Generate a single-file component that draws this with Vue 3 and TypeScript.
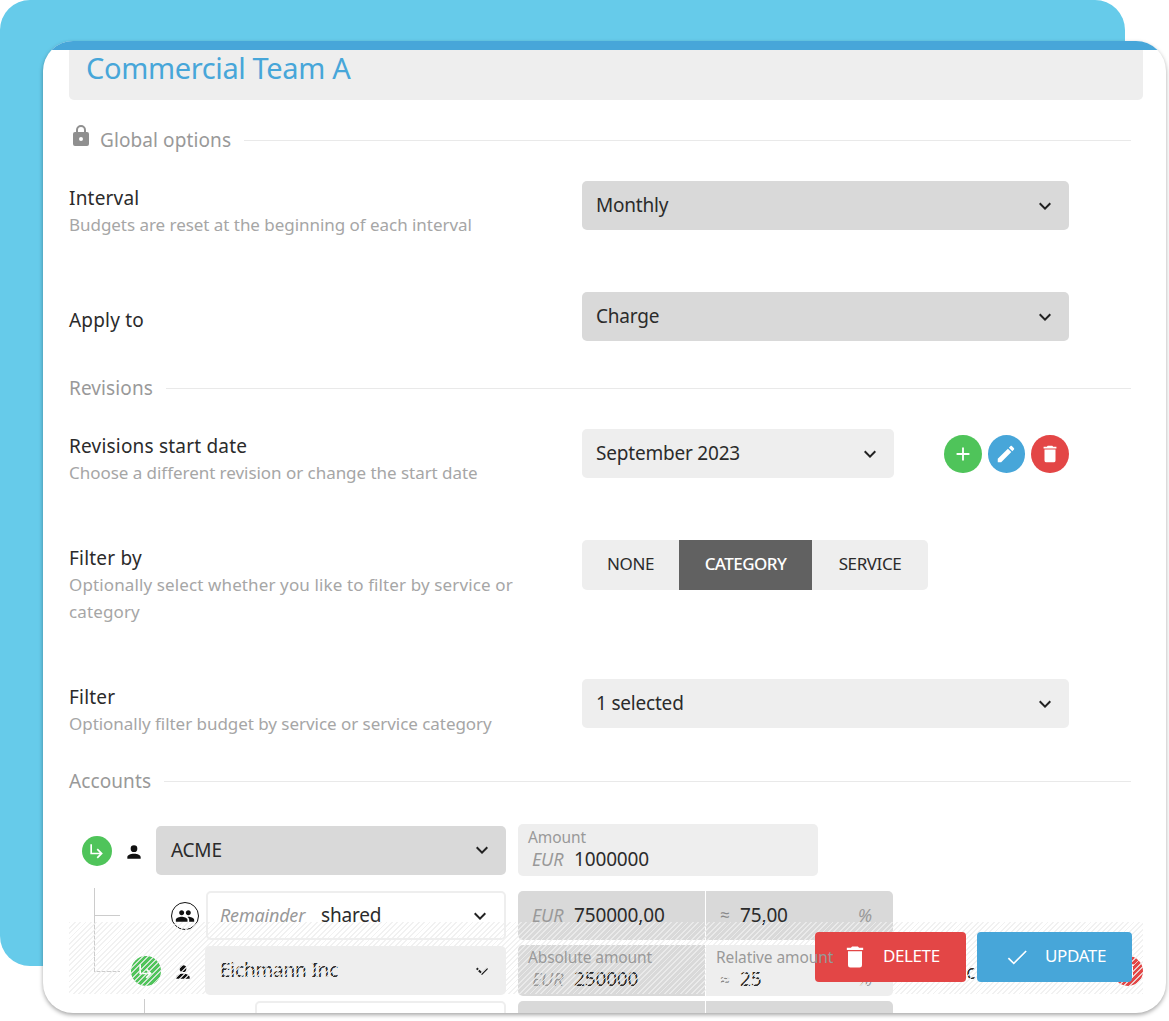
<script setup lang="ts">
const filterOptions: string[] = ['NONE', 'CATEGORY', 'SERVICE']
const activeFilter = 'CATEGORY'
const icons: Record<string, string> = {
  plus: 'M19 13h-6v6h-2v-6H5v-2h6V5h2v6h6v2z',
  pencil: 'M20.71 7.04c.39-.39.39-1.04 0-1.41l-2.34-2.34c-.37-.39-1.02-.39-1.41 0l-1.84 1.83 3.75 3.75M3 17.25V21h3.75L17.81 9.93l-3.75-3.75L3 17.25z',
  trash: 'M19 4h-3.5l-1-1h-5l-1 1H5v2h14M6 19a2 2 0 0 0 2 2h8a2 2 0 0 0 2-2V7H6v12z',
  lock: 'M12 17a2 2 0 0 0 2-2 2 2 0 0 0-2-2 2 2 0 0 0-2 2 2 2 0 0 0 2 2m6-9a2 2 0 0 1 2 2v10a2 2 0 0 1-2 2H6a2 2 0 0 1-2-2V10a2 2 0 0 1 2-2h1V6a5 5 0 0 1 5-5 5 5 0 0 1 5 5v2h1m-6-5a3 3 0 0 0-3 3v2h6V6a3 3 0 0 0-3-3z',
  check: 'M21 7L9 19l-5.5-5.5 1.1-1.1L9 16.8 19.9 5.9 21 7z',
  arrow: 'M19 15l-6 6-1.42-1.42L15.17 16H4V4h2v10h9.17l-3.59-3.58L13 9l6 6z',
  person: 'M12 4a4 4 0 0 1 4 4 4 4 0 0 1-4 4 4 4 0 0 1-4-4 4 4 0 0 1 4-4m0 10c4.42 0 8 1.79 8 4v2H4v-2c0-2.21 3.58-4 8-4z',
  people: 'M16 11c1.66 0 2.99-1.34 2.99-3S17.66 5 16 5c-1.66 0-3 1.34-3 3s1.34 3 3 3zm-8 0c1.66 0 2.99-1.34 2.99-3S9.66 5 8 5C6.34 5 5 6.34 5 8s1.34 3 3 3zm0 2c-2.33 0-7 1.17-7 3.5V19h14v-2.5c0-2.33-4.67-3.5-7-3.5zm8 0c-.29 0-.62.02-.97.05 1.16.84 1.97 1.97 1.97 3.45V19h6v-2.5c0-2.33-4.67-3.5-7-3.5z',
  chevron: 'M7.41 8.59L12 13.17l4.59-4.58L18 10l-6 6-6-6 1.41-1.41z'
}
</script>

<template>
  <div class="page">
    <div class="back-card"></div>
    <main class="card">
      <div class="strip"></div>
      <h1 class="title">Commercial Team A</h1>

      <div class="section section-first">
        <svg class="lock" viewBox="0 0 24 24"><path :d="icons.lock" /></svg>
        <span class="section-name">Global options</span>
        <span class="section-line"></span>
      </div>

      <div class="row row-interval">
        <div>
          <div class="label">Interval</div>
          <div class="desc">Budgets are reset at the beginning of each interval</div>
        </div>
        <div class="select dark">
          <span>Monthly</span>
          <svg class="chev" viewBox="0 0 24 24"><path :d="icons.chevron" /></svg>
        </div>
      </div>

      <div class="row row-apply">
        <div class="label label-single">Apply to</div>
        <div class="select dark">
          <span>Charge</span>
          <svg class="chev" viewBox="0 0 24 24"><path :d="icons.chevron" /></svg>
        </div>
      </div>

      <div class="section section-rev">
        <span class="section-name no-icon">Revisions</span>
        <span class="section-line"></span>
      </div>

      <div class="row row-rev">
        <div>
          <div class="label">Revisions start date</div>
          <div class="desc">Choose a different revision or change the start date</div>
        </div>
        <div class="rev-control">
          <div class="select rev-select">
            <span>September 2023</span>
            <svg class="chev" viewBox="0 0 24 24"><path :d="icons.chevron" /></svg>
          </div>
          <div class="round-group">
            <button class="round green"><svg viewBox="0 0 24 24"><path :d="icons.plus" /></svg></button>
            <button class="round blue"><svg viewBox="0 0 24 24"><path :d="icons.pencil" /></svg></button>
            <button class="round red"><svg viewBox="0 0 24 24"><path :d="icons.trash" /></svg></button>
          </div>
        </div>
      </div>

      <div class="row row-filterby">
        <div>
          <div class="label">Filter by</div>
          <div class="desc desc-narrow">Optionally select whether you like to filter by service or category</div>
        </div>
        <div class="seg">
          <span
            v-for="opt in filterOptions"
            :key="opt"
            class="seg-item"
            :class="[opt.toLowerCase(), { active: opt === activeFilter }]"
          >{{ opt }}</span>
        </div>
      </div>

      <div class="row row-filter">
        <div>
          <div class="label">Filter</div>
          <div class="desc">Optionally filter budget by service or service category</div>
        </div>
        <div class="select">
          <span>1 selected</span>
          <svg class="chev" viewBox="0 0 24 24"><path :d="icons.chevron" /></svg>
        </div>
      </div>

      <div class="section section-acc">
        <span class="section-name no-icon">Accounts</span>
        <span class="section-line"></span>
      </div>

      <div class="accounts">
        <span class="tree tree-v1"></span>
        <span class="tree tree-h1"></span>
        <span class="tree tree-h2"></span>
        <span class="tree tree-v2"></span>

        <div class="acc-row acc-1">
          <div class="acc-left">
            <span class="circle"><svg viewBox="0 0 24 24"><path :d="icons.arrow" /></svg></span>
            <svg class="person" viewBox="0 0 24 24"><path :d="icons.person" /></svg>
            <div class="select dark acc-select w350">
              <span>ACME</span>
              <svg class="chev" viewBox="0 0 24 24"><path :d="icons.chevron" /></svg>
            </div>
          </div>
          <div class="amount-box">
            <div class="mini">Amount</div>
            <div class="val-line"><em>EUR</em><span>1000000</span></div>
          </div>
        </div>

        <div class="acc-row acc-2">
          <div class="acc-left">
            <span class="people-ring"><svg viewBox="0 0 24 24"><path :d="icons.people" /></svg></span>
            <div class="select outlined acc-select w300">
              <span class="share"><em>Remainder</em><span>shared</span></span>
              <svg class="chev" viewBox="0 0 24 24"><path :d="icons.chevron" /></svg>
            </div>
          </div>
          <div class="pair">
            <div class="cell dark-cell"><div class="val-line"><em>EUR</em><span>750000,00</span></div></div>
            <div class="cell dark-cell">
              <div class="val-line approx"><i>≈</i><span>75,00</span><em class="pct">%</em></div>
            </div>
          </div>
        </div>

        <div class="acc-row acc-3">
          <div class="acc-left">
            <span class="circle"><svg viewBox="0 0 24 24"><path :d="icons.arrow" /></svg></span>
            <svg class="person" viewBox="0 0 24 24"><path :d="icons.person" /></svg>
            <div class="select acc-select w301">
              <span>Eichmann Inc</span>
              <svg class="chev" viewBox="0 0 24 24"><path :d="icons.chevron" /></svg>
            </div>
          </div>
          <div class="pair tall">
            <div class="cell dark-cell">
              <div class="mini">Absolute amount</div>
              <div class="val-line"><em>EUR</em><span>250000</span></div>
            </div>
            <div class="cell light-cell">
              <div class="mini">Relative amount</div>
              <div class="val-line approx"><i>≈</i><span>25</span><em class="pct">%</em></div>
            </div>
          </div>
          <span class="acc-extra">Inc</span>
          <span class="circle red-circle"><svg viewBox="0 0 24 24"><path :d="icons.trash" /></svg></span>
        </div>

        <div class="acc-row acc-4">
          <div class="acc-left">
            <div class="select outlined acc-select w251"></div>
          </div>
          <div class="pair">
            <div class="cell dark-cell"></div>
            <div class="cell dark-cell"></div>
          </div>
        </div>
      </div>

      <div class="hatch"></div>
      <div class="actions">
        <button class="act act-delete">
          <svg class="act-icon trash-icon" viewBox="0 0 24 24"><path :d="icons.trash" /></svg>
          <span>DELETE</span>
        </button>
        <button class="act act-update">
          <svg class="act-icon check-icon" viewBox="0 0 24 24"><path :d="icons.check" /></svg>
          <span>UPDATE</span>
        </button>
      </div>
    </main>
  </div>
</template>

<style>
html, body { margin: 0; background: #fff; }
</style>

<style scoped>
* { box-sizing: border-box; }
.page {
  position: relative;
  width: 1169px;
  height: 1021px;
  overflow: hidden;
  padding: 41px 0 0 43px;
  font-family: "Noto Sans", "Open Sans", sans-serif;
  color: #2b2b2b;
  background: #fff;
}
.back-card {
  position: absolute;
  left: 0;
  top: 0;
  width: 1125px;
  height: 966px;
  background: #66cbea;
  border-radius: 30px;
}
.card {
  position: relative;
  width: 1123px;
  height: 972px;
  padding: 0 23px 0 26px;
  background: #fff;
  border-radius: 30px;
  box-shadow: 0 2px 4px rgba(0, 0, 0, .35);
  overflow: hidden;
}
.strip {
  height: 9px;
  margin: 0 -23px 0 -26px;
  background: #47a6d9;
}
.title {
  margin: 0;
  height: 50px;
  padding: 0 0 0 17px;
  background: #eee;
  border-radius: 0 0 5px 5px;
  color: #47a6d9;
  font-size: 29px;
  line-height: 36px;
  font-weight: 400;
  letter-spacing: -.36px;
}
.section {
  display: flex;
  align-items: center;
  height: 24px;
  padding-right: 12px;
}
.section-first { margin-top: 28px; }
.section-rev { margin-top: 35px; }
.section-acc { margin-top: 41px; }
.lock { width: 24px; height: 24px; margin: -8px 7px 0 0; fill: #8f8f8f; flex: none; }
.section-name { color: #999; font-size: 19px; letter-spacing: .1px; }
.section-line { flex: 1; height: 1px; margin-left: 13px; background: #e9e9e9; }
.row { display: grid; grid-template-columns: 513px 487px; grid-template-rows: 49px; }
.row-interval { margin-top: 29px; height: 49px; }
.row-apply { margin-top: 62px; height: 49px; }
.row-rev { margin-top: 29px; height: 49px; }
.row-filterby { margin-top: 62px; height: 50px; grid-template-rows: 50px; }
.row-filter { margin-top: 89px; height: 49px; }
.label { margin-top: 4px; font-size: 19px; line-height: 26px; letter-spacing: .2px; }
.label-single { margin-top: 15px; }
.row-filterby .label, .row-filter .label { margin-top: 5px; }
.desc { font-size: 17px; line-height: 27px; color: #a6a6a6; letter-spacing: -.04px; }
.desc-narrow { width: 450px; letter-spacing: .12px; }
.select {
  display: flex;
  align-items: center;
  justify-content: space-between;
  height: 49px;
  padding: 0 12px 1px 14px;
  background: #eee;
  border-radius: 5px;
  font-size: 19px;
  letter-spacing: -.2px;
}
.select.dark { background: #d9d9d9; }
.chev { width: 24px; height: 24px; fill: #222; flex: none; margin-top: 1px; }
.rev-control { display: flex; align-items: center; height: 49px; }
.rev-select { width: 312px; flex: none; }
.round-group { display: flex; gap: 6px; margin-left: 50px; }
.round {
  width: 37.5px;
  height: 38px;
  padding: 0;
  border: 0;
  border-radius: 50%;
  display: flex;
  align-items: center;
  justify-content: center;
}
.round svg { width: 22px; height: 22px; fill: #fff; }
.green { background: #4fc45a; }
.blue { background: #47a6d9; }
.red { background: #e34646; }
.seg {
  display: flex;
  width: 346px;
  height: 50px;
  background: #eee;
  border-radius: 5px;
  overflow: hidden;
  font-size: 17px;
  letter-spacing: -.4px;
}
.seg-item { display: flex; align-items: center; justify-content: center; height: 50px; padding-bottom: 3px; }
.seg-item.none { width: 97px; }
.seg-item.category { width: 133px; letter-spacing: -.55px; }
.seg-item.service { width: 116px; }
.seg-item.active { background: #616161; color: #fff; font-weight: 500; }

.accounts { position: relative; margin-top: 31px; }
.acc-row { display: flex; align-items: flex-start; }
.acc-left {
  display: flex;
  align-items: center;
  justify-content: flex-end;
  width: 437px;
  margin-right: 12px;
  flex: none;
}
.circle {
  width: 30px;
  height: 30px;
  border-radius: 50%;
  background: #4fc45a;
  display: flex;
  align-items: center;
  justify-content: center;
  flex: none;
}
.circle svg { width: 20px; height: 20px; fill: #fff; }
.acc-left .circle { margin-top: 1px; }
.person { width: 20px; height: 20px; margin: 3px 12px 0; fill: #111; flex: none; }
.acc-select { flex: none; padding-left: 15px; }
.w350 { width: 350px; }
.w300 { width: 300px; }
.w301 { width: 301px; }
.w251 { width: 251px; }
.acc-1 { height: 52px; }
.acc-1 .acc-left { height: 52px; }
.acc-2 { margin-top: 15px; height: 49px; }
.acc-3 { margin-top: 5px; height: 51px; }
.acc-3 .acc-left { height: 51px; }
.acc-4 { margin-top: 5px; }
.amount-box {
  width: 300px;
  height: 52px;
  padding: 4px 10px 0;
  background: #eee;
  border-radius: 5px;
}
.mini {
  position: relative;
  z-index: 3;
  font-size: 15.5px;
  line-height: 18px;
  color: #999;
  letter-spacing: -.1px;
  white-space: nowrap;
}
.val-line { display: flex; align-items: center; height: 26px; font-size: 19px; padding-left: 4px; letter-spacing: -.15px; }
.val-line em { width: 42px; color: #999; font-size: 18px; flex: none; }
.people-ring {
  width: 28px;
  height: 28px;
  margin-right: 7px;
  border: 1px solid #111;
  border-radius: 50%;
  display: flex;
  align-items: center;
  justify-content: center;
  flex: none;
}
.people-ring svg { width: 20px; height: 20px; fill: #111; }
.outlined { background: #fff; border: 2px solid #eee; padding-left: 12px; }
.share { display: flex; align-items: center; }
.share em { color: #999; font-size: 18px; width: 101px; margin-top: -1px; }
.pair {
  display: flex;
  width: 375px;
  height: 49px;
  border-radius: 5px;
  overflow: hidden;
  gap: 1px;
  flex: none;
}
.pair.tall { height: 51px; }
.cell { flex: 1; padding: 0 10px; }
.dark-cell { background: #d9d9d9; }
.light-cell { background: #eee; }
.acc-2 .cell { display: flex; align-items: center; padding-bottom: 2px; }
.acc-2 .val-line { width: 100%; }
.acc-3 .cell { padding-top: 3px; }
.approx { padding-left: 4px; }
.approx i { width: 20px; font-style: normal; color: #888; font-size: 17px; flex: none; }
.approx .pct { width: auto; margin-left: auto; margin-right: 11px; font-size: 18px; }
.acc-extra { margin: 14px 0 0 55px; font-size: 19px; }
.red-circle { background: #e34646; margin: 11px 0 0 auto; }

.tree { position: absolute; background: #ccc; }
.tree-v1 { left: 25px; top: 64px; width: 1px; height: 83px; }
.tree-h1 { left: 25px; top: 91px; width: 26px; height: 1px; }
.tree-h2 { left: 25px; top: 147px; width: 26px; height: 1px; }
.tree-v2 { left: 75px; top: 175px; width: 1px; height: 40px; }

.hatch {
  position: absolute;
  z-index: 1;
  left: 26px;
  right: 23px;
  top: 881px;
  height: 72px;
  background: repeating-linear-gradient(135deg, rgba(238, 238, 238, .8) 0 1.3px, transparent 1.3px 3.8px);
}
.actions {
  position: absolute;
  z-index: 2;
  left: 772px;
  top: 891px;
  display: flex;
  gap: 11px;
}
.act {
  height: 50px;
  border: 0;
  border-radius: 4px;
  color: #fff;
  font-family: inherit;
  font-size: 17px;
  letter-spacing: -.4px;
  display: flex;
  align-items: center;
  padding-bottom: 4px;
}
.act-delete { width: 151px; background: #e34646; padding-left: 26px; padding-right: 0; }
.act-update { width: 155px; background: #47a6d9; padding-left: 27px; padding-right: 0; }
.act-icon { fill: #fff; flex: none; }
.trash-icon { width: 28px; height: 28px; margin-right: 14px; margin-top: 3px; }
.check-icon { width: 26px; height: 26px; margin-right: 15px; margin-top: 3px; }
</style>
